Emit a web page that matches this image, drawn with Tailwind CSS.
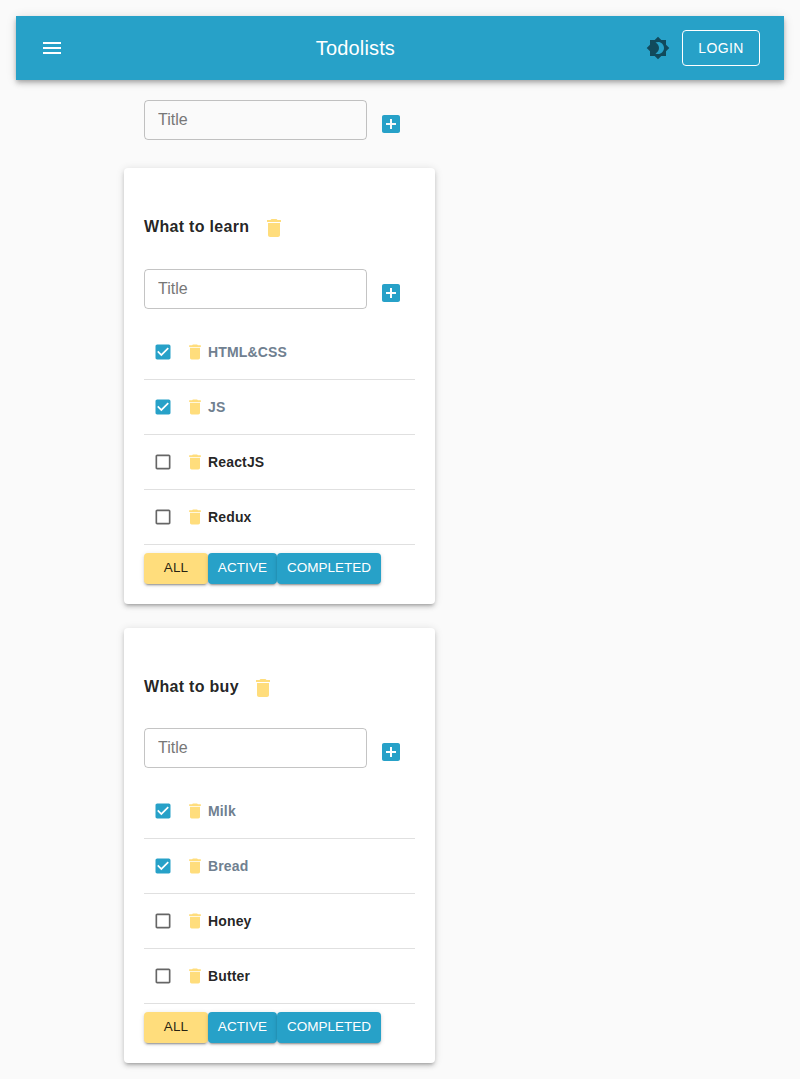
<!DOCTYPE html>
<html lang="en">
<head>
<meta charset="utf-8">
<title>Todolists</title>
<script src="https://cdn.jsdelivr.net/npm/@tailwindcss/browser@4"></script>
</head>
<body class="min-h-[1079px] bg-[#fafafa] p-4 pb-0 font-['Liberation_Sans',Arial,sans-serif] text-black/87">
<svg class="hidden">
  <symbol id="menu" viewBox="0 0 24 24"><path d="M3 18h18v-2H3v2zm0-5h18v-2H3v2zm0-7v2h18V6H3z"/></symbol>
  <symbol id="mode" viewBox="0 0 24 24"><path d="M20 8.69V4h-4.69L12 .69 8.69 4H4v4.69L.69 12 4 15.31V20h4.69L12 23.31 15.31 20H20v-4.69L23.31 12 20 8.69zM12 18c-.89 0-1.74-.2-2.5-.55C11.56 16.5 13 14.42 13 12s-1.44-4.5-3.5-5.45C10.26 6.2 11.11 6 12 6c3.31 0 6 2.69 6 6s-2.69 6-6 6z"/></symbol>
  <symbol id="add" viewBox="0 0 24 24"><path d="M19 3H5c-1.11 0-2 .9-2 2v14c0 1.1.89 2 2 2h14c1.1 0 2-.9 2-2V5c0-1.1-.9-2-2-2zm-2 10h-4v4h-2v-4H7v-2h4V7h2v4h4v2z"/></symbol>
  <symbol id="del" viewBox="0 0 24 24"><path d="M6 19c0 1.1.9 2 2 2h8c1.1 0 2-.9 2-2V7H6v12zM19 4h-3.5l-1-1h-5l-1 1H5v2h14V4z"/></symbol>
  <symbol id="on" viewBox="0 0 24 24"><path d="M19 3H5c-1.11 0-2 .9-2 2v14c0 1.1.89 2 2 2h14c1.11 0 2-.9 2-2V5c0-1.1-.89-2-2-2zm-9 14l-5-5 1.41-1.41L10 14.17l7.59-7.59L19 8l-9 9z"/></symbol>
  <symbol id="off" viewBox="0 0 24 24"><path d="M19 5v14H5V5h14m0-2H5c-1.1 0-2 .9-2 2v14c0 1.1.9 2 2 2h14c1.1 0 2-.9 2-2V5c0-1.1-.9-2-2-2z"/></symbol>
</svg>

<header class="flex h-16 items-center justify-between bg-[#27a1c8] px-6 text-white shadow-[0px_2px_4px_-1px_rgba(0,0,0,0.2),0px_4px_5px_0px_rgba(0,0,0,0.14),0px_1px_10px_0px_rgba(0,0,0,0.12)]">
  <div class="flex flex-1"><svg class="size-6 fill-current"><use href="#menu"/></svg></div>
  <h1 class="mr-[251px] text-xl tracking-[0.15px]">Todolists</h1>
  <div class="flex items-center gap-3">
    <svg class="size-6 fill-black/54"><use href="#mode"/></svg>
    <button class="h-9 w-[78px] rounded border border-white text-sm tracking-[0.4px]">LOGIN</button>
  </div>
</header>

<main class="px-[108px]">
  <form class="mt-5 flex h-10 gap-3 pl-5">
    <input class="w-[223px] rounded border border-black/23 px-[13px] text-base placeholder:text-[#777]" placeholder="Title">
    <svg class="mt-3 size-6 fill-[#27a1c8]"><use href="#add"/></svg>
  </form>

  <section class="mt-7 h-[436px] w-[311px] rounded bg-white px-5 pt-12 shadow-[0px_3px_3px_-2px_rgba(0,0,0,0.2),0px_3px_4px_0px_rgba(0,0,0,0.14),0px_1px_8px_0px_rgba(0,0,0,0.12)]">
    <div class="flex h-6 gap-[13px]">
      <h2 class="text-base leading-[22px] font-bold tracking-[0.3px]">What to learn</h2>
      <svg class="size-6 fill-[#ffdd7c]"><use href="#del"/></svg>
    </div>
    <form class="mt-[29px] flex h-10 gap-3">
      <input class="w-[223px] rounded border border-black/23 px-[13px] text-base placeholder:text-[#777]" placeholder="Title">
      <svg class="mt-3 size-6 fill-[#27a1c8]"><use href="#add"/></svg>
    </form>
    <ul class="mt-4 text-sm font-bold tracking-[0.15px]">
      <li class="flex h-[55px] items-center border-b border-black/12 pl-[9px] text-[#708090]"><svg class="size-5 fill-[#27a1c8]"><use href="#on"/></svg><svg class="mr-[3px] ml-3 size-5 fill-[#ffdd7c]"><use href="#del"/></svg><span>HTML&amp;CSS</span></li>
      <li class="flex h-[55px] items-center border-b border-black/12 pl-[9px] text-[#708090]"><svg class="size-5 fill-[#27a1c8]"><use href="#on"/></svg><svg class="mr-[3px] ml-3 size-5 fill-[#ffdd7c]"><use href="#del"/></svg><span>JS</span></li>
      <li class="flex h-[55px] items-center border-b border-black/12 pl-[9px]"><svg class="size-5 fill-black/60"><use href="#off"/></svg><svg class="mr-[3px] ml-3 size-5 fill-[#ffdd7c]"><use href="#del"/></svg><span>ReactJS</span></li>
      <li class="flex h-[55px] items-center border-b border-black/12 pl-[9px]"><svg class="size-5 fill-black/60"><use href="#off"/></svg><svg class="mr-[3px] ml-3 size-5 fill-[#ffdd7c]"><use href="#del"/></svg><span>Redux</span></li>
    </ul>
    <div class="mt-2 flex h-[31px] text-[13.5px] leading-5 tracking-[0.1px] text-white *:rounded *:pb-px *:shadow-[0px_3px_1px_-2px_rgba(0,0,0,0.2),0px_2px_2px_0px_rgba(0,0,0,0.14),0px_1px_5px_0px_rgba(0,0,0,0.12)]">
      <button class="w-16 bg-[#ffdd7c] text-black/87">ALL</button>
      <button class="w-[69px] bg-[#27a1c8]">ACTIVE</button>
      <button class="w-[104px] bg-[#27a1c8] tracking-normal">COMPLETED</button>
    </div>
  </section>

  <section class="mt-6 h-[435px] w-[311px] rounded bg-white px-5 pt-12 shadow-[0px_3px_3px_-2px_rgba(0,0,0,0.2),0px_3px_4px_0px_rgba(0,0,0,0.14),0px_1px_8px_0px_rgba(0,0,0,0.12)]">
    <div class="flex h-6 gap-3">
      <h2 class="text-base leading-[22px] font-bold tracking-[0.3px]">What to buy</h2>
      <svg class="size-6 fill-[#ffdd7c]"><use href="#del"/></svg>
    </div>
    <form class="mt-7 flex h-10 gap-3">
      <input class="w-[223px] rounded border border-black/23 px-[13px] text-base placeholder:text-[#777]" placeholder="Title">
      <svg class="mt-3 size-6 fill-[#27a1c8]"><use href="#add"/></svg>
    </form>
    <ul class="mt-4 text-sm font-bold tracking-[0.15px]">
      <li class="flex h-[55px] items-center border-b border-black/12 pl-[9px] text-[#708090]"><svg class="size-5 fill-[#27a1c8]"><use href="#on"/></svg><svg class="mr-[3px] ml-3 size-5 fill-[#ffdd7c]"><use href="#del"/></svg><span>Milk</span></li>
      <li class="flex h-[55px] items-center border-b border-black/12 pl-[9px] text-[#708090]"><svg class="size-5 fill-[#27a1c8]"><use href="#on"/></svg><svg class="mr-[3px] ml-3 size-5 fill-[#ffdd7c]"><use href="#del"/></svg><span>Bread</span></li>
      <li class="flex h-[55px] items-center border-b border-black/12 pl-[9px]"><svg class="size-5 fill-black/60"><use href="#off"/></svg><svg class="mr-[3px] ml-3 size-5 fill-[#ffdd7c]"><use href="#del"/></svg><span>Honey</span></li>
      <li class="flex h-[55px] items-center border-b border-black/12 pl-[9px]"><svg class="size-5 fill-black/60"><use href="#off"/></svg><svg class="mr-[3px] ml-3 size-5 fill-[#ffdd7c]"><use href="#del"/></svg><span>Butter</span></li>
    </ul>
    <div class="mt-2 flex h-[31px] text-[13.5px] leading-5 tracking-[0.1px] text-white *:rounded *:pb-px *:shadow-[0px_3px_1px_-2px_rgba(0,0,0,0.2),0px_2px_2px_0px_rgba(0,0,0,0.14),0px_1px_5px_0px_rgba(0,0,0,0.12)]">
      <button class="w-16 bg-[#ffdd7c] text-black/87">ALL</button>
      <button class="w-[69px] bg-[#27a1c8]">ACTIVE</button>
      <button class="w-[104px] bg-[#27a1c8] tracking-normal">COMPLETED</button>
    </div>
  </section>
</main>
</body>
</html>
